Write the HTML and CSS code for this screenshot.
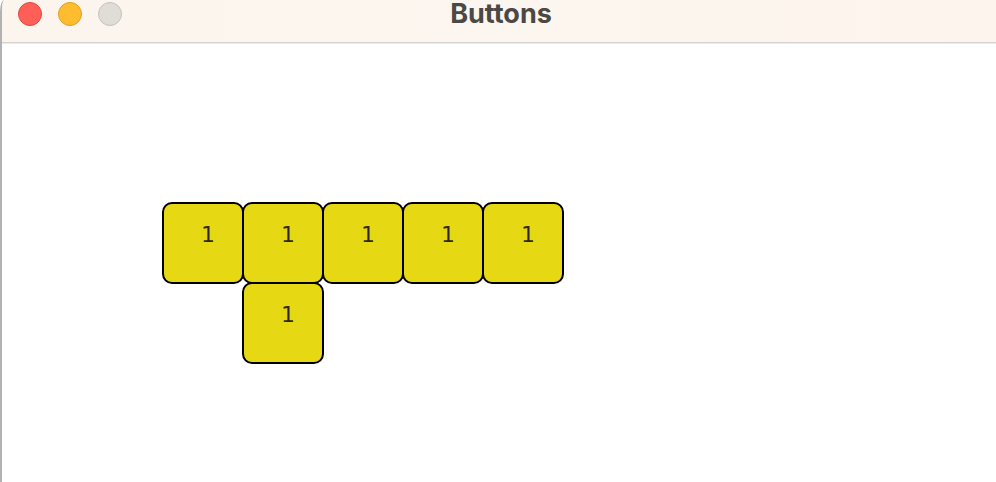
FILE: index.html
```html
<!DOCTYPE html>
<html lang="en">
<head>
<meta charset="utf-8">
<title>Buttons</title>
<link rel="stylesheet" href="styles.css">
</head>
<body>
<div class="window">
  <header class="titlebar">
    <div class="controls">
      <button class="control close" type="button" aria-label="Close"></button>
      <button class="control minimize" type="button" aria-label="Minimize"></button>
      <button class="control zoom" type="button" aria-label="Zoom" disabled></button>
    </div>
    <h1 class="title">Buttons</h1>
  </header>
  <main class="board">
    <div class="row">
      <button class="tile" type="button">1</button>
      <button class="tile" type="button">1</button>
      <button class="tile" type="button">1</button>
      <button class="tile" type="button">1</button>
      <button class="tile" type="button">1</button>
    </div>
    <div class="row second">
      <button class="tile" type="button">1</button>
    </div>
  </main>
</div>
</body>
</html>
```
FILE: styles.css
```css
* {
  box-sizing: border-box;
}

body {
  margin: 0;
  background: #fff;
}

.window {
  min-height: 100vh;
  border-left: 2px solid #b2b2b2;
  border-top-left-radius: 4px 12px;
}

.titlebar {
  display: grid;
  grid-template-columns: 1fr auto 1fr;
  align-items: start;
  height: 44px;
  padding-left: 4px;
  background: linear-gradient(to right, #fcf5ee, #fbf6ef 50%, #fdf4ed);
  border-bottom: 1px solid #ebebeb;
  border-top-left-radius: 2px 12px;
  box-shadow: inset 0 -1px #d5d4d5;
}

.controls {
  display: flex;
  gap: 16px;
  padding: 2px 0 0 12px;
}

.control {
  width: 24px;
  height: 24px;
  padding: 0;
  border: 1px solid;
  border-radius: 50%;
}

.close {
  background: #ff5f57;
  border-color: #e2463f;
}

.minimize {
  background: #febc2e;
  border-color: #dfa023;
}

.zoom {
  background: #e0dcd6;
  border-color: #c5c1bc;
}

.title {
  margin: 0;
  color: #4b4946;
  font: 700 27px/28px Inter, "Liberation Sans", sans-serif;
}

.board {
  padding: 158px 0 0 160px;
}

.row {
  display: flex;
}

.second {
  margin-top: -2px;
  padding-left: 80px;
}

.tile {
  width: 82px;
  height: 82px;
  padding: 0 0 16px 10px;
  border: 2px solid #000;
  border-radius: 10px;
  background: #e6d914;
  color: #2e2b04;
  font: 22px/26px "DejaVu Sans", sans-serif;
}

.tile + .tile {
  margin-left: -2px;
}
```
